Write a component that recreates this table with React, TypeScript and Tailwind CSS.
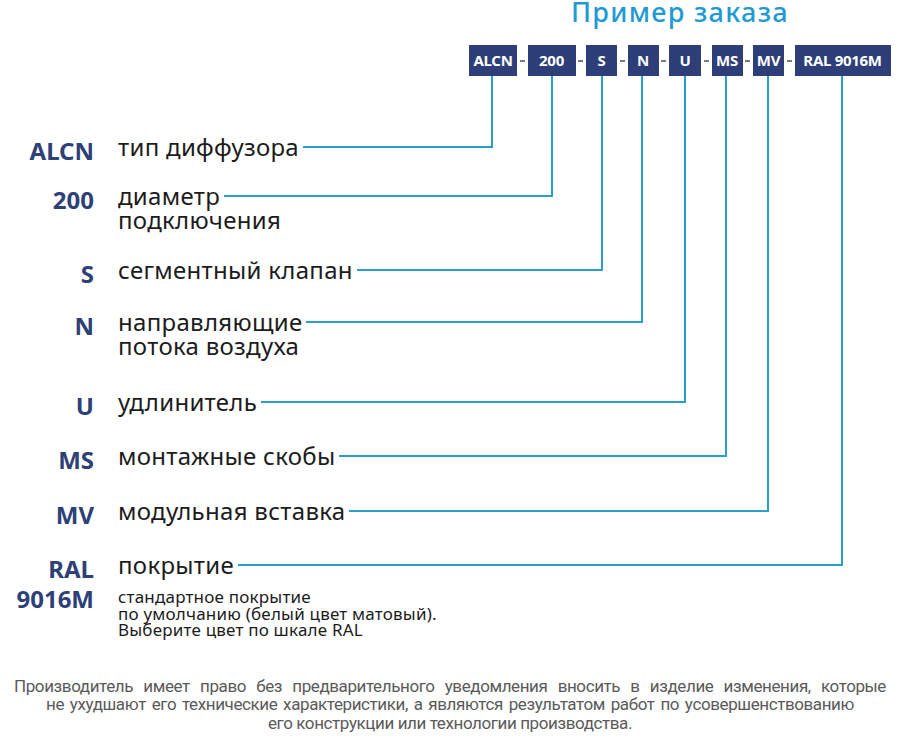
const LINE = '#2a9fcc'
const NAVY = '#2d3e78'

const BOXES = [
  { label: 'ALCN', w: 'w-[48px]' },
  { label: '200', w: 'w-[48px]' },
  { label: 'S', w: 'w-[31px]' },
  { label: 'N', w: 'w-[31px]' },
  { label: 'U', w: 'w-[32px]' },
  { label: 'MS', w: 'w-[31px]' },
  { label: 'MV', w: 'w-[31px]' },
  { label: 'RAL 9016M', w: 'w-[96px]' },
]

// x of each box's leader line and y of its row
const LEADERS = [
  { x: 492, y: 147 },
  { x: 552, y: 196 },
  { x: 602, y: 270 },
  { x: 642, y: 322 },
  { x: 685, y: 402 },
  { x: 726, y: 456 },
  { x: 768, y: 511 },
  { x: 842, y: 565 },
]

interface RowProps {
  code: React.ReactNode
  first: string
  rest?: string
  width: string
  className?: string
  children?: React.ReactNode
}

function Row({ code, first, rest, width, className = '', children }: RowProps) {
  return (
    <div className={`flex ${className}`}>
      <div className="-mb-[4px] w-[94px] shrink-0 pt-[4px] text-right text-[24px] font-bold leading-[24px] text-[#2d4176]">
        {code}
      </div>
      <div className={`ml-[24px] ${width} text-[24px] leading-[24px] tracking-[0.3px] text-[#1c1c1c]`}>
        <div className="flex items-center">
          <span className="whitespace-nowrap">{first}</span>
          <span className="ml-[4px] h-[2px] flex-1 bg-[#2a9fcc]" />
        </div>
        {rest && <div className="whitespace-nowrap">{rest}</div>}
        {children}
      </div>
    </div>
  )
}

export default function App() {
  return (
    <div className="relative h-[742px] w-[900px] overflow-hidden bg-white font-['Noto_Sans',sans-serif]">
      {/* header */}
      <div className="flex justify-end pr-[111px]">
        <h1 className="-mt-[5px] text-[27px] font-medium leading-[34px] tracking-[1.3px] text-[#1f9ad3]">
          Пример заказа
        </h1>
      </div>
      <div className="mt-[16px] flex pl-[469px]">
        {BOXES.map((b, i) => (
          <div key={b.label} className="flex items-center">
            {i > 0 && (
              <div className="flex w-[10.5px] justify-center">
                <span className="h-[2px] w-[5px] bg-[#7a7a7a]" />
              </div>
            )}
            <div
              className={`${b.w} flex h-[31px] items-center justify-center text-[15px] font-bold tracking-[-0.3px] text-white`}
              style={{ backgroundColor: NAVY }}
            >
              {b.label}
            </div>
          </div>
        ))}
      </div>

      {/* vertical leaders */}
      <svg className="pointer-events-none absolute left-0 top-0" width="900" height="742">
        {LEADERS.map((l) => (
          <line key={l.x} x1={l.x} y1={76} x2={l.x} y2={l.y + 1} stroke={LINE} strokeWidth={2} />
        ))}
      </svg>

      {/* rows */}
      <div className="mt-[59px] flex flex-col">
        <Row code="ALCN" first="тип диффузора" width="w-[375px]" />
        <Row className="mt-[25px]" code="200" first="диаметр" rest="подключения" width="w-[435px]" />
        <Row className="mt-[26px]" code="S" first="сегментный клапан" width="w-[485px]" />
        <Row className="mt-[28px]" code="N" first="направляющие" rest="потока воздуха" width="w-[525px]" />
        <Row className="mt-[32px]" code="U" first="удлинитель" width="w-[568px]" />
        <Row className="mt-[30px]" code="MS" first="монтажные скобы" width="w-[609px]" />
        <Row className="mt-[31px]" code="MV" first="модульная вставка" width="w-[651px]" />
        <Row
          className="mt-[30px]"
          code={
            <>
              RAL
              <br />
              <span className="mt-[6px] inline-block">9016M</span>
            </>
          }
          first="покрытие"
          width="w-[725px]"
        >
          <div className="mt-[12px] text-[17px] leading-[16.5px] tracking-[0.2px] text-[#1c1c1c]">
            стандартное покрытие
            <br />
            по умолчанию (белый цвет матовый).
            <br />
            Выберите цвет по шкале RAL
          </div>
        </Row>
      </div>

      {/* footer */}
      <div className="mt-[38px] flex flex-col items-center font-['Roboto',sans-serif] text-[17px] leading-[18.5px] tracking-[-0.4px] text-[#5a5a5a]">
        <div className="w-[872px] text-justify [text-align-last:justify]">
          Производитель имеет право без предварительного уведомления вносить в изделие изменения, которые
        </div>
        <div className="w-[808px] text-justify [text-align-last:justify]">
          не ухудшают его технические характеристики, а являются результатом работ по усовершенствованию
        </div>
        <div>его конструкции или технологии производства.</div>
      </div>
    </div>
  )
}
